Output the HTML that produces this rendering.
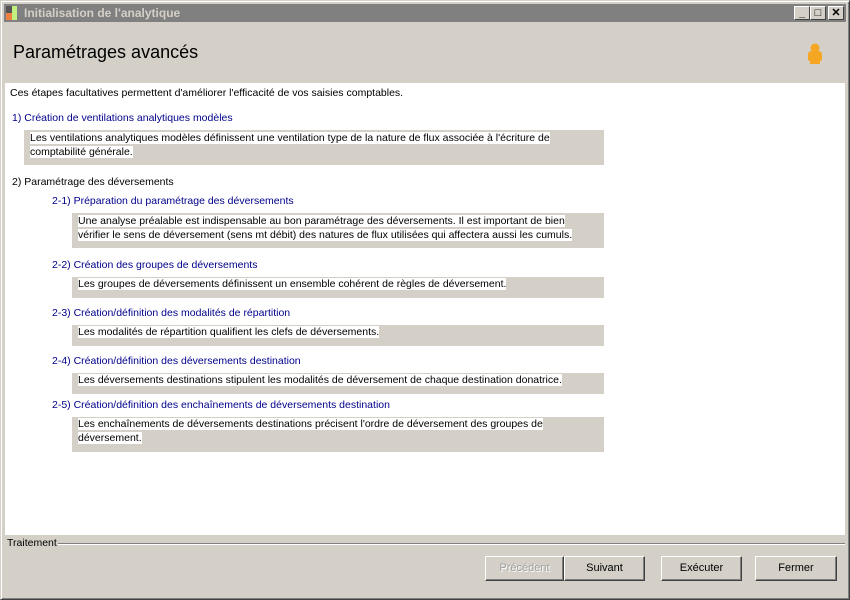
<!DOCTYPE html>
<html><head><meta charset="utf-8"><style>
*{margin:0;padding:0;box-sizing:border-box}
body{width:850px;height:600px;overflow:hidden;background:#d4d0c8;font-family:"Liberation Sans",Tahoma,sans-serif;font-size:10.5px;color:#000;position:relative}
.a{position:absolute;white-space:nowrap}
.frame{position:absolute;left:0;top:0;width:850px;height:600px;border:1px solid #d4d0c8;border-right-color:#404040;border-bottom-color:#404040;box-shadow:inset 1px 1px 0 #fff,inset -1px -1px 0 #808080}
.title{position:absolute;left:4px;top:4px;width:842px;height:18px;background:#808080;color:#d4d0c8;font-weight:bold;font-size:12px;line-height:18px;padding-left:20px}
.tb{position:absolute;top:6px;width:16px;height:14px;background:#d4d0c8;border:1px solid;border-color:#fff #404040 #404040 #fff;font-size:11px;line-height:12px;text-align:center;font-weight:bold}
.white{position:absolute;left:5px;top:83px;width:840px;height:452px;background:#fff}
.h{color:#00008b}
.box{position:absolute;background:#d4d0c8;left:72px;width:532px}
.box span{background:#fff}
.t{position:absolute;line-height:14px;white-space:nowrap}
.btn{position:absolute;top:556px;height:25px;border:1px solid;border-color:#fff #404040 #404040 #fff;box-shadow:inset -1px -1px 0 #808080;text-align:center;line-height:23px;font-size:11px}
</style></head><body>
<div class="frame"></div>
<div class="title">Initialisation de l'analytique</div>
<div class="a" style="left:6px;top:6px;width:6px;height:14px;background:#555"></div>
<div class="a" style="left:6px;top:13px;width:6px;height:7px;background:#f08040"></div>
<div class="a" style="left:12px;top:6px;width:5px;height:14px;background:#c0f080"></div>
<div class="tb" style="left:794px">_</div>
<div class="tb" style="left:810px">□</div>
<div class="tb" style="left:828px">✕</div>
<div class="a" style="left:13px;top:42px;font-size:18px">Paramétrages avancés</div>
<svg class="a" style="left:806px;top:43px" width="18" height="22" viewBox="0 0 18 22"><circle cx="9" cy="5" r="4.5" fill="#f5a623"/><path d="M2 12 Q2 8 6 8 H12 Q16 8 16 12 V16 Q16 18 14 18 V21 H4 V18 Q2 18 2 16Z" fill="#f5a623"/></svg>
<div class="white"></div>
<div class="a" style="left:10px;top:87px">Ces étapes facultatives permettent d'améliorer l'efficacité de vos saisies comptables.</div>
<div class="a h" style="left:12px;top:112px">1) Création de ventilations analytiques modèles</div>
<div class="box" style="left:24px;width:580px;top:130px;height:35px"><div class="t" style="left:6px;top:1px"><span>Les ventilations analytiques modèles définissent une ventilation type de la nature de flux associée à l'écriture de</span><br><span>comptabilité générale.</span></div></div>
<div class="a" style="left:12px;top:176px">2) Paramétrage des déversements</div>
<div class="a h" style="left:52px;top:195px">2-1) Préparation du paramétrage des déversements</div>
<div class="box" style="top:213px;height:35px"><div class="t" style="left:6px;top:1px"><span>Une analyse préalable est indispensable au bon paramétrage des déversements. Il est important de bien</span><br><span>vérifier le sens de déversement (sens mt débit) des natures de flux utilisées qui affectera aussi les cumuls.</span></div></div>
<div class="a h" style="left:52px;top:259px">2-2) Création des groupes de déversements</div>
<div class="box" style="top:277px;height:21px"><div class="t" style="left:6px;top:0px"><span>Les groupes de déversements définissent un ensemble cohérent de règles de déversement.</span></div></div>
<div class="a h" style="left:52px;top:307px">2-3) Création/définition des modalités de répartition</div>
<div class="box" style="top:325px;height:21px"><div class="t" style="left:6px;top:0px"><span>Les modalités de répartition qualifient les clefs de déversements.</span></div></div>
<div class="a h" style="left:52px;top:355px">2-4) Création/définition des déversements destination</div>
<div class="box" style="top:373px;height:21px"><div class="t" style="left:6px;top:0px"><span>Les déversements destinations stipulent les modalités de déversement de chaque destination donatrice.</span></div></div>
<div class="a h" style="left:52px;top:399px">2-5) Création/définition des enchaînements de déversements destination</div>
<div class="box" style="top:417px;height:35px"><div class="t" style="left:6px;top:0px"><span>Les enchaînements de déversements destinations précisent l'ordre de déversement des groupes de</span><br><span>déversement.</span></div></div>
<div class="a" style="left:58px;top:543px;width:787px;height:2px;border-top:1px solid #808080;border-bottom:1px solid #fff"></div>
<div class="a" style="left:7px;top:537px">Traitement</div>
<div class="btn" style="left:485px;width:79px;color:#a0a0a0;text-shadow:1px 1px 0 #fff">Précédent</div>
<div class="btn" style="left:564px;width:81px">Suivant</div>
<div class="btn" style="left:661px;width:81px">Exécuter</div>
<div class="btn" style="left:755px;width:82px">Fermer</div>
</body></html>
